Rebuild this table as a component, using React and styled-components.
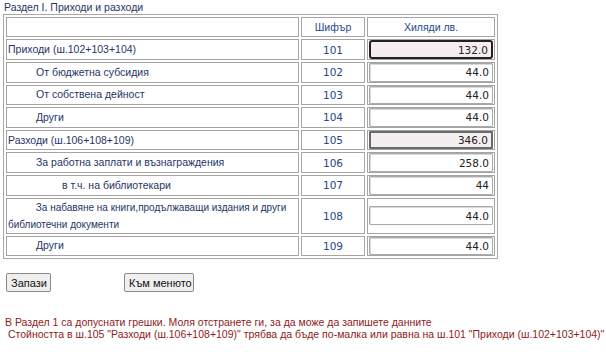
import React from "react";
import styled, { createGlobalStyle } from "styled-components";

const Global = createGlobalStyle`
  html, body { margin: 0; padding: 0; background: #fff; }
  body { font-family: "Liberation Sans", Arial, sans-serif; }
`;

const Page = styled.div`
  width: 606px;
  height: 354px;
  overflow: hidden;
  padding: 0 0 0 3px;
  box-sizing: border-box;
`;

const Title = styled.div`
  font-size: 10.5px;
  line-height: 13px;
  color: #1f3566;
  padding: 1px 0 0 1px;
  height: 13px;
`;

const Table = styled.table`
  border: 1px solid #a8a8a8;
  border-spacing: 2px;
  border-collapse: separate;
  width: 495px;
  table-layout: fixed;
  font-size: 10.5px;
`;

const Cell = styled.td`
  border: 1px solid #a4a4a4;
  padding: 0 1px;
  box-sizing: border-box;
  height: ${(p) => p.$h || 20.6}px;
  vertical-align: middle;
`;

const HeadCell = styled(Cell)`
  text-align: center;
  color: #244a8c;
  height: 20px;
`;

const Label = styled(Cell)`
  color: #1f3566;
  line-height: 17px;
  font-size: ${(p) => (p.$small ? 10 : 10.5)}px;
  padding-left: ${(p) => (p.$indent || 0) + 1}px;
  white-space: nowrap;
`;

const Code = styled(Cell)`
  text-align: center;
  color: #24468a;
  font-family: "DejaVu Sans", Verdana, sans-serif;
  font-size: 10.5px;
`;

const Value = styled(Cell)`
  padding: 0 1px;
`;

const Input = styled.input`
  box-sizing: border-box;
  width: 100%;
  height: ${(p) => (p.$hot ? 19 : 18.6)}px;
  margin: 0;
  text-align: right;
  font-family: "DejaVu Sans", Verdana, sans-serif;
  font-size: 10.5px;
  color: #222;
  padding: 0 3px;
  display: block;
  outline: none;
  background: ${(p) => (p.$total ? "#f5eeee" : "#fff")};
  border: ${(p) =>
    p.$hot ? "2px solid #222" : p.$total ? "2px solid #6a6a6a" : "1px solid #a9a9a9"};
  border-radius: ${(p) => (p.$hot ? 3 : 1)}px;
  box-shadow: ${(p) => (p.$total ? "none" : "inset 1px 1px 0 #d8d8d8")};
`;

const Buttons = styled.div`
  display: flex;
  gap: 73px;
  padding: 14px 0 0 3px;
`;

const Button = styled.button`
  font-family: "Liberation Sans", Arial, sans-serif;
  font-size: 11px;
  color: #111;
  background: #efefef;
  border: 1px solid #8a8a8a;
  border-radius: 2px;
  height: 19px;
  padding: 0 4px;
  white-space: nowrap;
  width: ${(p) => p.$w}px;
`;

const Errors = styled.div`
  margin-top: 24px;
  font-size: 10.5px;
  line-height: 12px;
  color: #8e1b1b;
  padding-left: 2px;
  white-space: nowrap;
`;

const rows = [
  { label: "Приходи (ш.102+103+104)", code: "101", value: "132.0", hot: true, total: true },
  { label: "От бюджетна субсидия", indent: 28, code: "102", value: "44.0" },
  { label: "От собствена дейност", indent: 28, code: "103", value: "44.0" },
  { label: "Други", indent: 28, code: "104", value: "44.0" },
  { label: "Разходи (ш.106+108+109)", code: "105", value: "346.0", total: true },
  { label: "За работна заплати и възнаграждения", indent: 28, code: "106", value: "258.0" },
  { label: "в т.ч. на библиотекари", indent: 54, code: "107", value: "44" },
  {
    label: (
      <>
        {"\u00a0\u00a0\u00a0\u00a0\u00a0\u00a0\u00a0\u00a0\u00a0\u00a0За набавяне на книги,продължаващи издания и други"}
        <br />
        библиотечни документи
      </>
    ),
    code: "108",
    value: "44.0",
    h: 35,
    small: true,
  },
  { label: "Други", indent: 28, code: "109", value: "44.0" },
];

export default function App() {
  return (
    <Page>
      <Global />
      <Title>Раздел I. Приходи и разходи</Title>
      <Table>
        <colgroup>
          <col style={{ width: 293 }} />
          <col style={{ width: 64 }} />
          <col style={{ width: 128 }} />
        </colgroup>
        <tbody>
          <tr>
            <HeadCell></HeadCell>
            <HeadCell>Шифър</HeadCell>
            <HeadCell>Хиляди лв.</HeadCell>
          </tr>
          {rows.map((r) => (
            <tr key={r.code}>
              <Label $indent={r.indent} $h={r.h} $small={r.small}>{r.label}</Label>
              <Code $h={r.h}>{r.code}</Code>
              <Value $h={r.h}>
                <Input readOnly value={r.value} $hot={r.hot} $total={r.total} />
              </Value>
            </tr>
          ))}
        </tbody>
      </Table>
      <Buttons>
        <Button $w={45}>Запази</Button>
        <Button $w={70}>Към менюто</Button>
      </Buttons>
      <Errors>
        <div>В Раздел 1 са допуснати грешки. Моля отстранете ги, за да може да запишете данните</div>
        <div>&nbsp;Стойността в ш.105 "Разходи (ш.106+108+109)" трябва да бъде по-малка или равна на ш.101 "Приходи (ш.102+103+104)"</div>
      </Errors>
    </Page>
  );
}
